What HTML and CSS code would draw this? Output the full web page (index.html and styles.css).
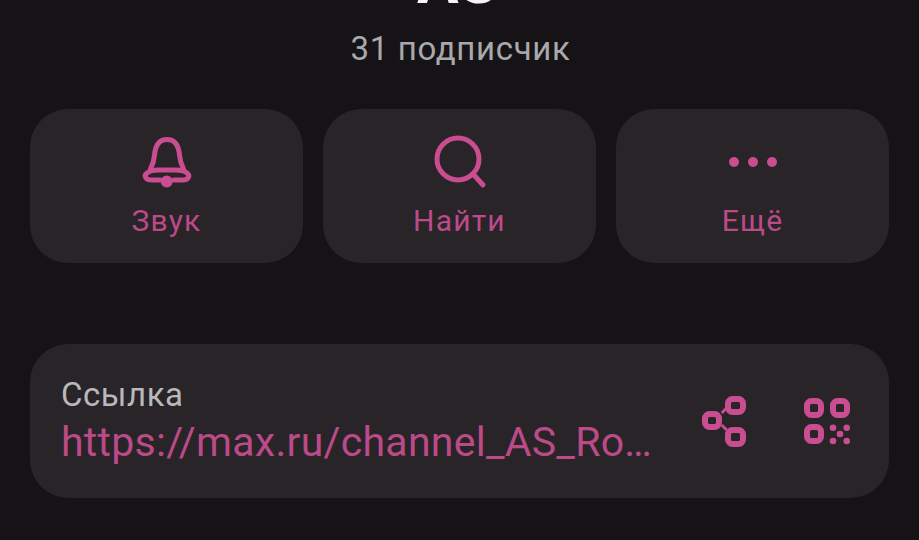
FILE: index.html
```html
<!DOCTYPE html>
<html lang="ru">
<head>
<meta charset="utf-8">
<title>AS</title>
<link rel="stylesheet" href="styles.css">
</head>
<body>
<main class="page">
  <h1 class="title">AS</h1>
  <p class="subs">31 подписчик</p>
  <div class="actions">
    <button class="action">
      <svg class="action-icon" viewBox="0 0 56 56" fill="none">
        <path class="st" d="M11.500 35 C14 30 15 27 15.500 21 C16.500 10 21 5.500 28 5.500 C35 5.500 39.500 10 40.500 21 C41 27 42 30 44.500 35"/>
        <path class="st" d="M21 46 H12 C7 46 5 42 7 40 C9 37.500 14 36 20 36 H36 C42 36 47 37.500 49 40 C51 42 49 46 44 46 H35"/>
        <circle class="dot" cx="27.700" cy="47.500" r="6"/>
      </svg>
      <span class="action-label">Звук</span>
    </button>
    <button class="action">
      <svg class="action-icon" viewBox="0 0 56 56" fill="none">
        <circle class="st" cx="26" cy="25" r="21"/>
        <path class="st" d="M41 40 L51 51"/>
      </svg>
      <span class="action-label">Найти</span>
    </button>
    <button class="action">
      <svg class="action-icon" viewBox="0 0 56 56">
        <circle class="dot" cx="9" cy="28" r="5"/>
        <circle class="dot" cx="28" cy="28" r="5"/>
        <circle class="dot" cx="47" cy="28" r="5"/>
      </svg>
      <span class="action-label">Ещё</span>
    </button>
  </div>
  <section class="link-card">
    <div class="link-text">
      <div class="link-caption">Ссылка</div>
      <div class="link-url">https://max.ru/channel_AS_Ro…</div>
    </div>
    <div class="link-tools">
      <svg class="tool-share" viewBox="0 0 46 53" fill="none">
        <rect class="st2" x="27" y="4" width="15" height="13" rx="4.500"/>
        <rect class="st2" x="4" y="19" width="14" height="13" rx="4.500"/>
        <rect class="st2" x="27" y="35" width="15" height="14" rx="4.500"/>
        <path class="st3" d="M20.700 18 L25.700 13 M20.700 30 L25.700 35"/>
      </svg>
      <svg class="tool-qr" viewBox="0 0 48 50" fill="none">
        <rect class="st2" x="4" y="5" width="14" height="14" rx="4.500"/>
        <rect class="st2" x="30" y="5" width="14" height="14" rx="4.500"/>
        <rect class="st2" x="4" y="31" width="14" height="14" rx="4.500"/>
        <circle class="dot" cx="30" cy="31.700" r="3.300"/>
        <circle class="dot" cx="43.700" cy="31.700" r="3.300"/>
        <circle class="dot" cx="37" cy="38" r="3.300"/>
        <circle class="dot" cx="30" cy="45" r="3.300"/>
        <circle class="dot" cx="43.700" cy="45" r="3.300"/>
      </svg>
    </div>
  </section>
</main>
</body>
</html>
```
FILE: styles.css
```css
* { box-sizing: border-box; }
html, body {
  margin: 0;
  height: 100%;
  background: #151316;
  overflow: hidden;
}
.page {
  width: 919px;
  height: 540px;
  padding: 0 30px;
  font-family: Roboto, "Noto Sans", sans-serif;
  overflow: hidden;
}
.title {
  margin: -46px 0 0;
  padding-right: 5px;
  height: 56px;
  line-height: 56px;
  font-size: 62px;
  font-weight: 700;
  color: #f4f4f4;
  text-align: center;
}
.subs {
  margin: 19px 0 0;
  padding-left: 2px;
  height: 40px;
  line-height: 40px;
  font-size: 33px;
  letter-spacing: 0.65px;
  color: #a9a8aa;
  text-align: center;
}
.actions {
  margin-top: 40px;
  display: grid;
  grid-template-columns: repeat(3, 273px);
  gap: 20px;
}
.action {
  height: 154px;
  padding: 25px 0 0;
  border: 0;
  border-radius: 38px;
  background: #282428;
  display: flex;
  flex-direction: column;
  align-items: center;
  font-family: inherit;
}
.action-icon {
  width: 56px;
  height: 56px;
}
.action-label {
  margin-top: 14px;
  font-size: 30px;
  line-height: 34px;
  letter-spacing: 1.2px;
  color: #bb4a88;
}
.st {
  stroke: #c94d90;
  stroke-width: 5;
  stroke-linecap: round;
  stroke-linejoin: round;
}
.st2 {
  stroke: #c94d90;
  stroke-width: 6;
}
.st3 {
  stroke: #c94d90;
  stroke-width: 3;
}
.dot { fill: #c94d90; }
.link-card {
  margin-top: 81px;
  height: 154px;
  padding: 0 38px 0 31px;
  border-radius: 38px;
  background: #282428;
  display: flex;
  align-items: center;
  justify-content: space-between;
}
.link-text {
  padding-bottom: 3px;
}
.link-caption {
  font-size: 33px;
  line-height: 40px;
  letter-spacing: 0.55px;
  color: #b9b8ba;
}
.link-url {
  margin-top: 4px;
  font-size: 41px;
  line-height: 46px;
  letter-spacing: 0.27px;
  color: #bb4a88;
  white-space: nowrap;
}
.link-tools {
  display: flex;
  gap: 56px;
  align-items: center;
}
.tool-share {
  width: 46px;
  height: 53px;
}
.tool-qr {
  width: 48px;
  height: 50px;
}
```
